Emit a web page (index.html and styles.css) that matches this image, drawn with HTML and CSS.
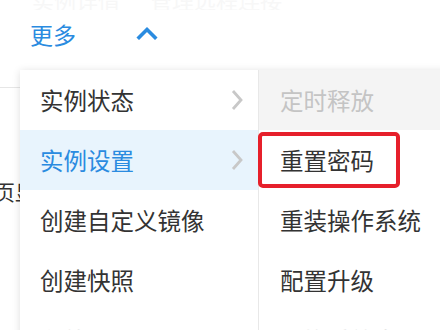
FILE: index.html
```html
<!DOCTYPE html>
<html lang="zh-CN">
<head>
<meta charset="utf-8">
<link rel="stylesheet" href="styles.css">
</head>
<body>
<div class="page">
  <div class="faint-row"><span class="faint-text">实例详情</span><span class="faint-text">管理远程连接</span></div>
  <div class="header">
    <span class="more">更多</span>
    <svg class="caret" width="22" height="14" viewBox="0 0 22 14"><path d="M3 11.5 L11 3.5 L19 11.5" fill="none" stroke="#2a8be0" stroke-width="3.6" stroke-linecap="square"/></svg>
  </div>
  <div class="content">
    <div class="content-text">页显</div>
  </div>
  <div class="menu">
    <ul class="col col-left">
      <li class="item">实例状态<svg class="arrow" width="14" height="24" viewBox="0 0 14 24"><path d="M3 3 L11 12 L3 21" fill="none" stroke="#c8c8c8" stroke-width="2.8"/></svg></li>
      <li class="item active">实例设置<svg class="arrow" width="14" height="24" viewBox="0 0 14 24"><path d="M3 3 L11 12 L3 21" fill="none" stroke="#c8c8c8" stroke-width="2.8"/></svg></li>
      <li class="item">创建自定义镜像</li>
      <li class="item">创建快照</li>
      <li class="item faded">释放设置</li>
    </ul>
    <ul class="col col-right">
      <li class="item disabled">定时释放</li>
      <li class="item marked">重置密码<span class="mark"></span></li>
      <li class="item">重装操作系统</li>
      <li class="item">配置升级</li>
      <li class="item faded">更换系统盘</li>
    </ul>
  </div>
</div>
</body>
</html>
```
FILE: styles.css
```css
html, body {
  margin: 0;
  padding: 0;
  background: #ffffff;
}
body {
  font-family: "Noto Sans CJK SC", "Noto Sans", sans-serif;
  overflow: hidden;
}
.page {
  position: relative;
  width: 440px;
  height: 330px;
  overflow: hidden;
}
.faint-row {
  height: 10px;
  overflow: hidden;
  display: flex;
  align-items: flex-end;
  padding-left: 32px;
  gap: 30px;
}
.faint-text {
  font-size: 22px;
  line-height: 22px;
  color: #f7f7f7;
  margin-bottom: 0;
  white-space: nowrap;
}
.header {
  height: 60px;
  box-sizing: border-box;
  padding-top: 9px;
  padding-left: 30px;
  display: flex;
  align-items: flex-start;
}
.more {
  font-size: 23px;
  line-height: 30px;
  color: #2a8be0;
}
.caret {
  margin-left: 60px;
  margin-top: 7px;
}
.content {
  margin-top: 17px;
  border-top: 1px solid #e6e6e6;
  height: 200px;
}
.content-text {
  margin-top: 89px;
  margin-left: -6px;
  font-size: 21px;
  line-height: 28px;
  color: #333333;
}
.menu {
  position: absolute;
  left: 20px;
  top: 70px;
  width: 440px;
  height: 280px;
  display: flex;
  background: #ffffff;
  box-shadow: 0 1px 8px rgba(0, 0, 0, 0.13);
}
.col {
  list-style: none;
  margin: 0;
  padding: 0;
}
.col-left {
  width: 238px;
  border-right: 1px solid #e8e8e8;
  flex: none;
}
.col-right {
  flex: 1;
}
.item {
  position: relative;
  height: 60px;
  display: flex;
  align-items: center;
  font-size: 23.5px;
  color: #333333;
  white-space: nowrap;
}
.col-left .item {
  padding-left: 20px;
  padding-right: 14px;
}
.col-right .item {
  padding-left: 21px;
}
.arrow {
  margin-left: auto;
}
.active {
  background: #e8f4fd;
  color: #2a8be0;
}
.disabled {
  background: #f4f4f4;
  color: #c4c4c4;
}
.faded {
  color: #d8d8d8;
}
.mark {
  position: absolute;
  left: -1px;
  top: 2px;
  width: 142px;
  height: 56px;
  box-sizing: border-box;
  border: 4.5px solid #e6202b;
  border-radius: 5px;
}
```
